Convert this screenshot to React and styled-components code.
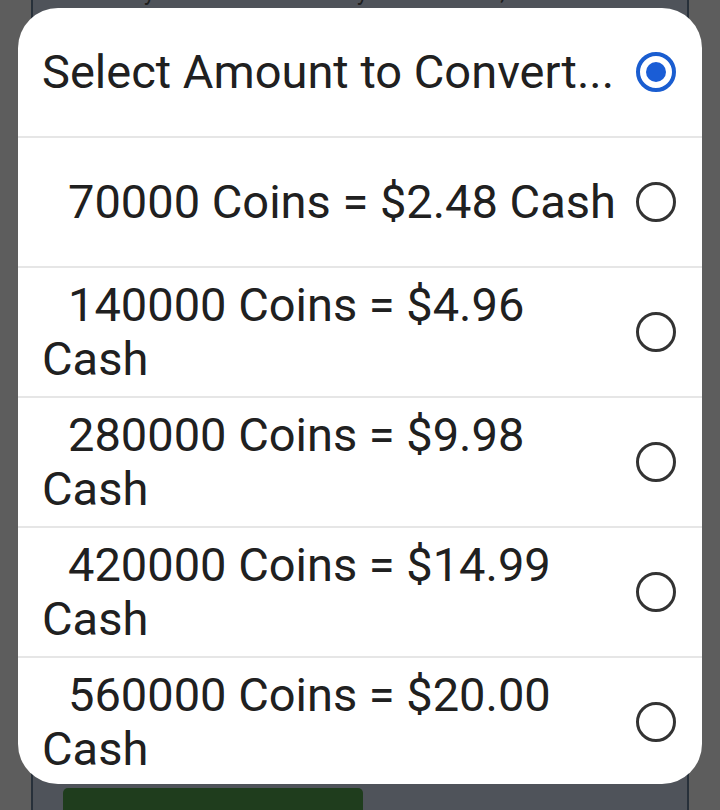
import React from 'react';
import styled, { createGlobalStyle } from 'styled-components';

const Global = createGlobalStyle`
  html, body { margin: 0; padding: 0; }
  body {
    background: #5d5d5d;
    font-family: Roboto, "Noto Sans", sans-serif;
    overflow: hidden;
  }
`;

const Page = styled.div`
  position: relative;
  width: 720px;
  height: 810px;
  background: #5d5d5d;
  padding-left: 31px;
  box-sizing: border-box;
  overflow: hidden;
  display: flex;
`;

const Panel = styled.div`
  width: 658px;
  height: 810px;
  box-sizing: border-box;
  border-left: 2px solid #27303a;
  border-right: 2px solid #27303a;
  background: #4f535a;
  display: flex;
  flex-direction: column;
  align-items: flex-start;
  padding-left: 30px;
`;

const PanelText = styled.p`
  margin: -20px 0 0 2px;
  font-size: 23px;
  line-height: 26px;
  color: #1e1e1e;
  white-space: nowrap;
`;

const GreenButton = styled.div`
  margin-top: auto;
  width: 300px;
  height: 22px;
  background: #1f3d1d;
  border-radius: 5px 5px 0 0;
`;

const Overlay = styled.div`
  position: absolute;
  inset: 0;
`;

const Dialog = styled.div`
  position: absolute;
  left: 18px;
  top: 8px;
  width: 684px;
  height: 776px;
  background: #ffffff;
  border-radius: 40px;
  overflow: hidden;
  display: flex;
  flex-direction: column;
`;

const Row = styled.div`
  flex: none;
  height: 128px;
  border-top: ${(p) => (p.$header ? 'none' : '2px solid #e6e6e6')};
  display: flex;
  align-items: center;
  padding: 0 26px 0 24px;
  gap: 16px;
`;

const Label = styled.div`
  flex: 1;
  min-width: 0;
  font-size: 47px;
  line-height: 54px;
  color: #202020;
  text-indent: ${(p) => (p.$header ? 0 : 26)}px;
  white-space: ${(p) => (p.$header ? 'nowrap' : 'normal')};
`;

const Radio = styled.div`
  flex: none;
  width: 40px;
  height: 40px;
  box-sizing: border-box;
  border-radius: 50%;
  border: ${(p) => (p.$checked ? '4px solid #1a5dd0' : '3px solid #333333')};
  display: flex;
  align-items: center;
  justify-content: center;
`;

const Dot = styled.div`
  width: 20px;
  height: 20px;
  border-radius: 50%;
  background: #1a5dd6;
`;

const options = [
  '70000 Coins = $2.48 Cash',
  '140000 Coins = $4.96 Cash',
  '280000 Coins = $9.98 Cash',
  '420000 Coins = $14.99 Cash',
  '560000 Coins = $20.00 Cash',
];

export default function App() {
  return (
    <>
      <Global />
      <Page>
        <Panel>
          <PanelText>Your PayPal Email is currently: Not Entered, Please</PanelText>
          <GreenButton />
        </Panel>
        <Overlay>
          <Dialog>
            <Row $header>
              <Label $header>Select Amount to Convert...</Label>
              <Radio $checked>
                <Dot />
              </Radio>
            </Row>
            {options.map((o) => (
              <Row key={o}>
                <Label>{o}</Label>
                <Radio />
              </Row>
            ))}
          </Dialog>
        </Overlay>
      </Page>
    </>
  );
}
